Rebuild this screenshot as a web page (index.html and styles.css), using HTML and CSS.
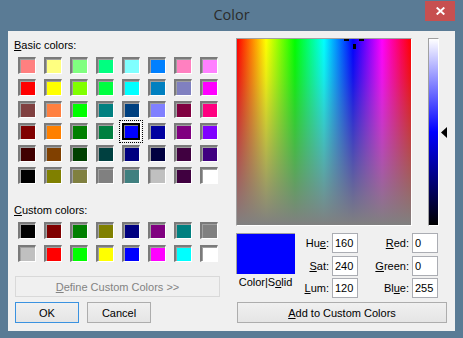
FILE: index.html
```html
<!DOCTYPE html>
<html lang="en">
<head>
  <meta charset="UTF-8">
  <title>Color</title>
  <link rel="stylesheet" href="styles.css">
</head>
<body>
  <div class="window">
    <div class="titlebar">
      <span></span>
      <span class="title">Color</span>
      <button class="close" aria-label="Close">
        <svg width="9" height="8" viewBox="0 0 9 8"><path d="M0.7 0.5 L8.3 7.5 M8.3 0.5 L0.7 7.5" stroke="#fff" stroke-width="1.9" fill="none"/></svg>
      </button>
    </div>

    <div class="content">
      <!-- Left side: swatches -->
      <div class="left">
        <div class="label"><u>B</u>asic colors:</div>
        <div class="swatches basic">
          <span style="background:#ff8080"></span><span style="background:#ffff80"></span><span style="background:#80ff80"></span><span style="background:#00ff80"></span><span style="background:#80ffff"></span><span style="background:#0080ff"></span><span style="background:#ff80c0"></span><span style="background:#ff80ff"></span>
          <span style="background:#ff0000"></span><span style="background:#ffff00"></span><span style="background:#80ff00"></span><span style="background:#00ff40"></span><span style="background:#00ffff"></span><span style="background:#0080c0"></span><span style="background:#8080c0"></span><span style="background:#ff00ff"></span>
          <span style="background:#804040"></span><span style="background:#ff8040"></span><span style="background:#00ff00"></span><span style="background:#008080"></span><span style="background:#004080"></span><span style="background:#8080ff"></span><span style="background:#800040"></span><span style="background:#ff0080"></span>
          <span style="background:#800000"></span><span style="background:#ff8000"></span><span style="background:#008000"></span><span style="background:#008040"></span><span class="selected" style="background:#0000ff"></span><span style="background:#0000a0"></span><span style="background:#800080"></span><span style="background:#8000ff"></span>
          <span style="background:#400000"></span><span style="background:#804000"></span><span style="background:#004000"></span><span style="background:#004040"></span><span style="background:#000080"></span><span style="background:#000040"></span><span style="background:#400040"></span><span style="background:#400080"></span>
          <span style="background:#000000"></span><span style="background:#808000"></span><span style="background:#808040"></span><span style="background:#808080"></span><span style="background:#408080"></span><span style="background:#c0c0c0"></span><span style="background:#400040"></span><span style="background:#ffffff"></span>
        </div>

        <div class="label custom-label"><u>C</u>ustom colors:</div>
        <div class="swatches custom">
          <span style="background:#000000"></span><span style="background:#800000"></span><span style="background:#008000"></span><span style="background:#808000"></span><span style="background:#000080"></span><span style="background:#800080"></span><span style="background:#008080"></span><span style="background:#808080"></span>
          <span style="background:#c0c0c0"></span><span style="background:#ff0000"></span><span style="background:#00ff00"></span><span style="background:#ffff00"></span><span style="background:#0000ff"></span><span style="background:#ff00ff"></span><span style="background:#00ffff"></span><span style="background:#ffffff"></span>
        </div>

        <button class="btn define" disabled><u>D</u>efine Custom Colors &gt;&gt;</button>
        <div class="actions">
          <button class="btn ok">OK</button>
          <button class="btn">Cancel</button>
        </div>
      </div>

      <!-- Right side: mixer -->
      <div class="right">
        <div class="picker">
          <div class="spectrum">
            <i class="cross cross-left"></i>
            <i class="cross cross-right"></i>
            <i class="cross cross-down"></i>
          </div>
          <div class="lum"></div>
          <svg class="arrow" width="6" height="11" viewBox="0 0 6 11"><polygon points="0,5.5 6,0 6,11" fill="#000"/></svg>
        </div>

        <div class="mixer">
          <div class="preview-col">
            <div class="preview"></div>
            <div class="preview-label">Color|S<u>o</u>lid</div>
          </div>
          <div class="fields">
            <label>Hu<u>e</u>:</label><input type="text" value="160">
            <label><u>R</u>ed:</label><input type="text" value="0">
            <label><u>S</u>at:</label><input type="text" value="240">
            <label><u>G</u>reen:</label><input type="text" value="0">
            <label><u>L</u>um:</label><input type="text" value="120">
            <label>Bl<u>u</u>e:</label><input type="text" value="255">
          </div>
        </div>

        <button class="btn add"><u>A</u>dd to Custom Colors</button>
      </div>
    </div>
  </div>
</body>
</html>
```

FILE: styles.css
```css
body {
  margin: 0;
  font-family: "Liberation Sans", Arial, sans-serif;
  font-size: 11px;
  color: #000;
}
.window {
  width: 463px;
  height: 338px;
  background: #5a7b95;
  box-sizing: border-box;
}
.titlebar {
  height: 31px;
  padding: 0 8px;
  display: grid;
  grid-template-columns: 1fr auto 1fr;
}
.title {
  font-family: "Open Sans", sans-serif;
  font-size: 14.5px;
  color: #2b2b2b;
  line-height: 31px;
  margin-top: -1px;
}
.close {
  justify-self: end;
  margin-top: 1px;
  width: 30px;
  height: 20px;
  border: 0;
  padding: 0;
  background: #c75050;
  display: flex;
  align-items: center;
  justify-content: center;
}
.content {
  margin: 0 8px;
  height: 300px;
  background: #f0f0f0;
  display: flex;
}
.left {
  width: 228px;
  flex-shrink: 0;
  padding-top: 8px;
}
.label {
  line-height: 13px;
  padding-left: 6px;
}
.custom-label {
  margin-top: 20px;
}
.swatches {
  display: grid;
  grid-template-columns: repeat(8, 18px);
  grid-auto-rows: 17px;
  column-gap: 8px;
  row-gap: 5px;
  margin: 5px 0 0 10px;
}
.swatches.custom {
  row-gap: 6px;
}
.swatches span {
  box-sizing: border-box;
  border-top: 2px solid #7a7a7a;
  border-left: 2px solid #7a7a7a;
  border-right: 1px solid #fff;
  border-bottom: 1px solid #fff;
  box-shadow: inset 1px 1px 0 #a0a0a0;
}
.swatches span.selected {
  border: 2px solid #000;
  box-shadow: inset 1px 1px 0 #808080, 0 0 0 1px #fff;
  outline: 1px dotted #000;
  outline-offset: 2px;
}
.btn {
  font-family: "Liberation Sans", Arial, sans-serif;
  font-size: 11px;
  color: #000;
  height: 21px;
  padding: 0;
  border: 1px solid #adadad;
  background: linear-gradient(#f0f0f0, #e5e5e5);
}
.define {
  display: block;
  width: 205px;
  margin: 14px 0 0 7px;
  color: #838383;
  background: #f0f0f0;
  border-color: #d9d9d9;
}
.actions {
  display: flex;
  gap: 8px;
  margin: 5px 0 0 7px;
}
.actions .btn {
  width: 64px;
}
.ok {
  border-color: #3a92e0;
}
.right {
  padding-top: 7px;
  width: 211px;
}
.picker {
  display: flex;
  align-items: flex-start;
}
.spectrum {
  position: relative;
  width: 176px;
  height: 188px;
  box-sizing: border-box;
  border-top: 1px solid #a0a0a0;
  border-left: 1px solid #a0a0a0;
  border-right: 1px solid #fff;
  border-bottom: 1px solid #fff;
  background:
    linear-gradient(to bottom, rgba(128, 128, 128, 0), rgba(128, 128, 128, 0.15) 20%, #808080),
    linear-gradient(to right, #f00, #ff0 16.67%, #0f0 33.33%, #0ff 50%, #00f 66.67%, #f0f 83.33%, #f00);
}
.cross {
  position: absolute;
  background: #000;
}
.cross-left {
  left: 107px;
  top: 0;
  width: 5px;
  height: 2px;
}
.cross-right {
  left: 122px;
  top: 0;
  width: 5px;
  height: 2px;
}
.cross-down {
  left: 116px;
  top: 5px;
  width: 3px;
  height: 5px;
}
.lum {
  margin-left: 16px;
  width: 11px;
  height: 188px;
  box-sizing: border-box;
  border-top: 1px solid #a0a0a0;
  border-left: 1px solid #a0a0a0;
  border-right: 1px solid #fff;
  border-bottom: 1px solid #fff;
  background: linear-gradient(to bottom, #fff, #00f 50%, #000);
}
.arrow {
  margin: 89px 0 0 2px;
}
.mixer {
  display: flex;
  margin-top: 7px;
}
.preview-col {
  width: 59px;
}
.preview {
  height: 41px;
  box-sizing: border-box;
  border-top: 1px solid #a0a0a0;
  border-left: 1px solid #a0a0a0;
  background: #0000ff;
}
.preview-label {
  text-align: center;
  line-height: 13px;
  margin-top: 2px;
}
.fields {
  display: grid;
  grid-template-columns: 37px 26px 54px 26px;
  grid-auto-rows: 20px;
  row-gap: 2.5px;
}
.fields label {
  text-align: right;
  padding-right: 3px;
  line-height: 20px;
}
.fields input {
  box-sizing: border-box;
  width: 26px;
  height: 20px;
  margin: 0;
  padding: 0 0 0 2px;
  border: 1px solid #abadb3;
  background: #fff;
  font-family: "Liberation Sans", Arial, sans-serif;
  font-size: 11px;
  color: #000;
}
.add {
  display: block;
  width: 210px;
  margin: 4px 0 0 1px;
}
```
